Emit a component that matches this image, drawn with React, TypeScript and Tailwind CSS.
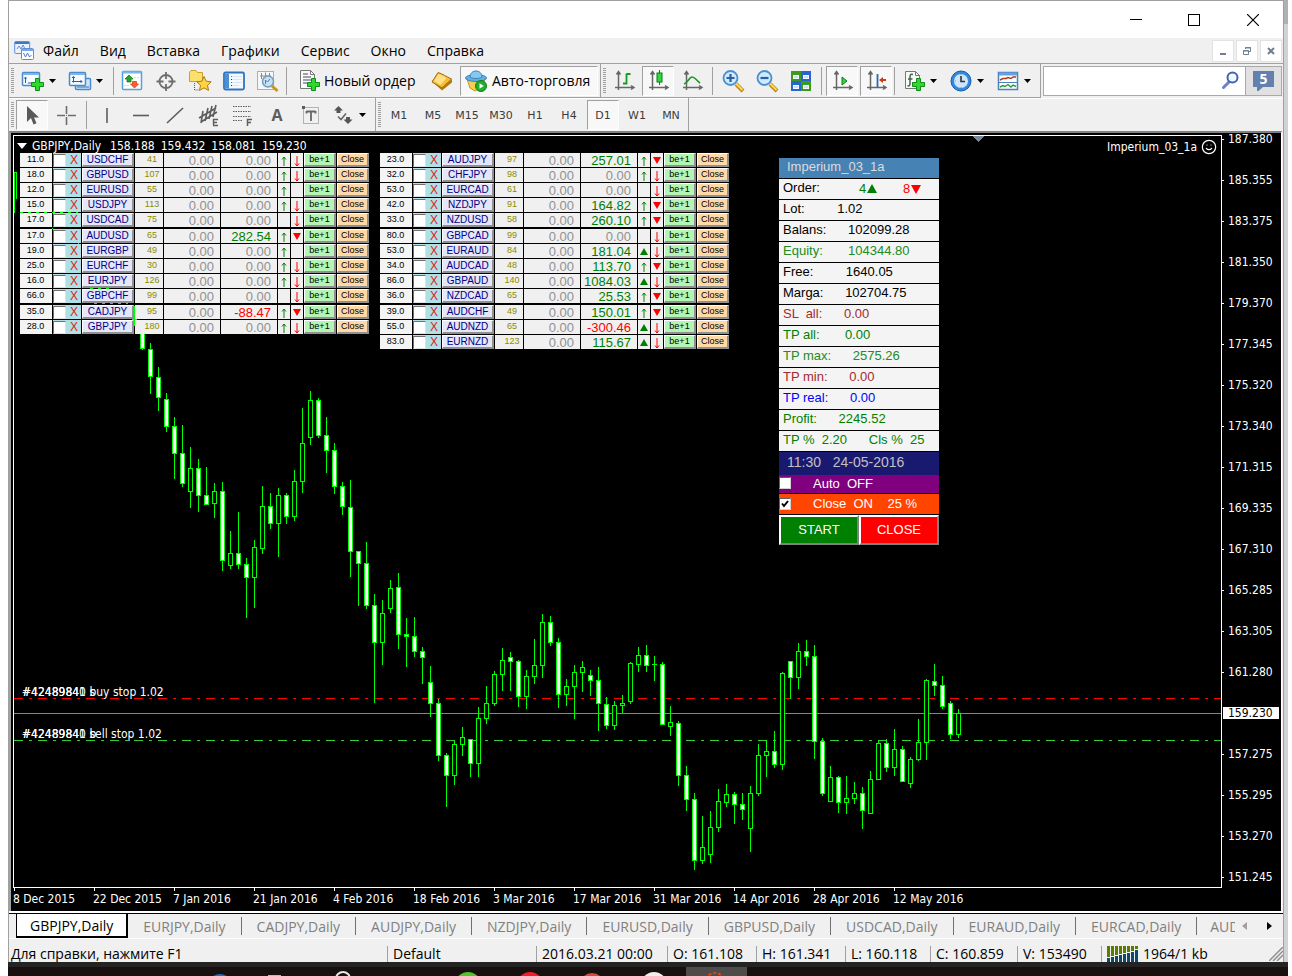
import React from "react";
import { Smile } from "lucide-react";

type Candle = [x: number, high: number, top: number, bottom: number, low: number, down: 0 | 1];

type PairRow = {
  spread: string;
  pair: string;
  points: number;
  profit: string;
  up: "" | "thin" | "full";
  down: "" | "thin" | "full";
};

const candles: Candle[] = [
  [134, 306, 319, 320, 326, 1],
  [142, 322, 330, 349, 350, 1],
  [150, 343, 349, 377, 394, 1],
  [158, 367, 377, 398, 411, 1],
  [166, 393, 399, 427, 432, 1],
  [174, 417, 426, 454, 479, 1],
  [182, 425, 453, 484, 487, 1],
  [190, 447, 468, 492, 508, 0],
  [198, 459, 468, 496, 512, 1],
  [206, 467, 495, 505, 505, 1],
  [214, 483, 491, 504, 518, 0],
  [222, 482, 491, 561, 571, 1],
  [230, 531, 553, 566, 569, 0],
  [238, 512, 553, 565, 569, 1],
  [246, 558, 564, 578, 618, 1],
  [254, 540, 547, 578, 608, 0],
  [262, 486, 506, 549, 554, 0],
  [270, 493, 506, 524, 529, 1],
  [278, 488, 495, 524, 557, 0],
  [286, 493, 495, 517, 524, 1],
  [294, 470, 481, 517, 521, 0],
  [302, 408, 443, 482, 493, 0],
  [310, 391, 400, 438, 445, 0],
  [318, 398, 400, 436, 438, 1],
  [326, 417, 435, 451, 473, 1],
  [334, 443, 450, 487, 494, 1],
  [342, 482, 486, 507, 515, 1],
  [350, 480, 507, 552, 577, 1],
  [358, 551, 551, 564, 606, 1],
  [366, 542, 563, 606, 609, 1],
  [374, 594, 605, 643, 703, 1],
  [382, 600, 613, 643, 665, 0],
  [390, 580, 588, 609, 613, 0],
  [398, 573, 587, 635, 649, 1],
  [406, 618, 634, 637, 667, 1],
  [414, 617, 636, 652, 657, 1],
  [422, 647, 651, 658, 684, 1],
  [430, 666, 682, 704, 717, 1],
  [438, 699, 703, 756, 761, 1],
  [446, 753, 755, 776, 807, 1],
  [454, 741, 744, 776, 785, 0],
  [462, 727, 737, 745, 756, 0],
  [470, 739, 739, 764, 777, 1],
  [478, 707, 718, 764, 777, 0],
  [486, 686, 703, 719, 724, 0],
  [494, 671, 674, 704, 706, 0],
  [502, 648, 660, 675, 691, 0],
  [510, 652, 657, 662, 691, 1],
  [518, 660, 661, 697, 707, 1],
  [526, 670, 676, 697, 709, 0],
  [534, 639, 665, 677, 684, 0],
  [542, 614, 622, 666, 678, 0],
  [550, 616, 622, 643, 646, 1],
  [558, 638, 642, 695, 708, 1],
  [566, 679, 686, 695, 706, 0],
  [574, 665, 672, 687, 719, 0],
  [582, 661, 667, 673, 692, 0],
  [590, 670, 675, 681, 696, 1],
  [598, 667, 680, 704, 731, 1],
  [606, 697, 704, 726, 729, 1],
  [614, 701, 705, 726, 730, 0],
  [622, 695, 703, 706, 713, 0],
  [630, 662, 663, 702, 704, 0],
  [638, 647, 655, 665, 672, 0],
  [646, 645, 655, 666, 672, 1],
  [654, 656, 664, 665, 681, 1],
  [662, 662, 664, 725, 725, 1],
  [670, 706, 722, 727, 736, 0],
  [678, 721, 723, 776, 786, 1],
  [686, 766, 775, 800, 811, 1],
  [694, 793, 799, 861, 870, 1],
  [702, 816, 847, 861, 864, 0],
  [710, 811, 827, 855, 863, 0],
  [718, 789, 801, 828, 832, 0],
  [726, 784, 794, 803, 807, 0],
  [734, 792, 794, 805, 824, 1],
  [742, 793, 804, 810, 820, 1],
  [750, 786, 793, 829, 852, 0],
  [758, 744, 755, 794, 796, 0],
  [766, 740, 751, 756, 777, 0],
  [774, 731, 751, 765, 768, 1],
  [782, 672, 673, 765, 770, 0],
  [790, 661, 661, 678, 699, 1],
  [798, 643, 651, 678, 689, 0],
  [806, 640, 651, 657, 666, 1],
  [814, 645, 656, 742, 759, 1],
  [822, 738, 741, 794, 796, 1],
  [830, 766, 777, 802, 802, 0],
  [838, 776, 777, 803, 813, 1],
  [846, 776, 798, 803, 814, 0],
  [854, 782, 793, 799, 804, 0],
  [862, 787, 793, 811, 829, 1],
  [870, 771, 779, 814, 814, 0],
  [878, 740, 743, 780, 780, 0],
  [886, 739, 743, 768, 772, 1],
  [894, 729, 749, 768, 776, 0],
  [902, 746, 749, 782, 782, 1],
  [910, 757, 759, 784, 788, 0],
  [918, 719, 742, 760, 761, 0],
  [926, 679, 680, 743, 760, 0],
  [934, 664, 681, 686, 696, 1],
  [942, 676, 685, 707, 709, 1],
  [950, 701, 703, 735, 739, 1],
  [958, 709, 713, 735, 738, 0],
];

const row = (
  spread: string,
  pair: string,
  points: number,
  profit: string,
  up: PairRow["up"],
  down: PairRow["down"]
): PairRow => ({ spread, pair, points, profit, up, down });

const leftPairs: PairRow[] = [
  row("11.0", "USDCHF", 41, "0.00", "thin", "thin"),
  row("18.0", "GBPUSD", 107, "0.00", "thin", "thin"),
  row("12.0", "EURUSD", 55, "0.00", "thin", ""),
  row("15.0", "USDJPY", 113, "0.00", "thin", "thin"),
  row("17.0", "USDCAD", 75, "0.00", "", "thin"),
  row("17.0", "AUDUSD", 65, "282.54", "thin", "full"),
  row("19.0", "EURGBP", 49, "0.00", "thin", ""),
  row("25.0", "EURCHF", 30, "0.00", "thin", "thin"),
  row("16.0", "EURJPY", 126, "0.00", "thin", "thin"),
  row("66.0", "GBPCHF", 99, "0.00", "", "thin"),
  row("35.0", "CADJPY", 95, "-88.47", "thin", "full"),
  row("28.0", "GBPJPY", 180, "0.00", "thin", "thin"),
];

const rightPairs: PairRow[] = [
  row("23.0", "AUDJPY", 97, "257.01", "thin", "full"),
  row("32.0", "CHFJPY", 98, "0.00", "thin", "thin"),
  row("53.0", "EURCAD", 61, "0.00", "", "thin"),
  row("42.0", "NZDJPY", 91, "164.82", "thin", "full"),
  row("33.0", "NZDUSD", 58, "260.10", "thin", "full"),
  row("80.0", "GBPCAD", 99, "0.00", "", "thin"),
  row("53.0", "EURAUD", 84, "181.04", "full", "thin"),
  row("34.0", "AUDCAD", 48, "113.70", "thin", "full"),
  row("86.0", "GBPAUD", 140, "1084.03", "full", "thin"),
  row("36.0", "NZDCAD", 65, "25.53", "thin", "full"),
  row("39.0", "AUDCHF", 49, "150.01", "thin", "full"),
  row("55.0", "AUDNZD", 65, "-300.46", "full", "thin"),
  row("83.0", "EURNZD", 123, "115.67", "full", "thin"),
];

const prices = [
  "187.380", "185.355", "183.375", "181.350", "179.370", "177.345", "175.320",
  "173.340", "171.315", "169.335", "167.310", "165.285", "163.305", "161.280",
  "159.230", "157.275", "155.295", "153.270", "151.245",
];

const dates = [
  "8 Dec 2015", "22 Dec 2015", "7 Jan 2016", "21 Jan 2016", "4 Feb 2016", "18 Feb 2016",
  "3 Mar 2016", "17 Mar 2016", "31 Mar 2016", "14 Apr 2016", "28 Apr 2016", "12 May 2016",
];

const accountRows = [
  { text: "Lot:         1.02", color: "text-black" },
  { text: "Balans:      102099.28", color: "text-black" },
  { text: "Equity:       104344.80", color: "text-[#228b22]" },
  { text: "Free:         1640.05", color: "text-black" },
  { text: "Marga:      102704.75", color: "text-black" },
  { text: "SL  all:      0.00", color: "text-[#a52a2a]" },
  { text: "TP all:       0.00", color: "text-[#008000]" },
  { text: "TP max:      2575.26", color: "text-[#228b22]" },
  { text: "TP min:      0.00", color: "text-[#a52a2a]" },
  { text: "TP real:      0.00", color: "text-[#0000ff]" },
  { text: "Profit:      2245.52", color: "text-[#008000]" },
  { text: "TP %  2.20      Cls %  25", color: "text-[#008000]" },
];

const menuItems = ["Файл", "Вид", "Вставка", "Графики", "Сервис", "Окно", "Справка"];
const quotes = ["158.188", "159.432", "158.081", "159.230"];
const periods = ["M1", "M5", "M15", "M30", "H1", "H4", "D1", "W1", "MN"];
const chartTabs = ["EURJPY", "CADJPY", "AUDJPY", "NZDJPY", "EURUSD", "GBPUSD", "USDCAD", "EURAUD", "EURCAD"];

const Icon: React.FC<{ children: React.ReactNode }> = ({ children }) => (
  <svg width="24" height="24" viewBox="0 0 24 24" fill="none" className="shrink-0" aria-hidden="true">
    {children}
  </svg>
);

const Plus = () => (
  <path d="M14.5 9.5h4v4h4v4h-4v4h-4v-4h-4v-4h4z" fill="#2fd82f" stroke="#0c8f14" />
);

const Axes = () => (
  <path d="M6.5 3v18M3 18.5h18M4.5 5.5l2-3 2 3M19 16.500l3 2-3 2" stroke="#666" strokeWidth="1.500" />
);

const NewChartIcon = () => (
  <Icon>
    <rect x="1.500" y="3.500" width="17" height="13" rx="1" fill="#f4faff" stroke="#4a8ccb" strokeWidth="1.500" />
    <path d="M2 5h16" stroke="#7fb4e6" strokeWidth="2" />
    <path d="M4.500 8v6M3.500 9.500l1-1.500 1 1.500M7 14h4" stroke="#335f9c" />
    <Plus />
  </Icon>
);

const ProfilesIcon = () => (
  <Icon>
    <rect x="7.500" y="9.500" width="15" height="11" rx="1" fill="#cfe4f8" stroke="#4a8ccb" strokeWidth="1.500" />
    <path d="M9 18h12" stroke="#2f6db5" />
    <rect x="1.500" y="3.500" width="16" height="13" rx="1" fill="#f4faff" stroke="#4a8ccb" strokeWidth="1.500" />
    <path d="M2 5h15" stroke="#7fb4e6" strokeWidth="2" />
    <path d="M5.500 7.500v6M4 9l1.500-1.500L7 9M4 12.500h10M12.500 11l1.500 1.500-1.500 1.500" stroke="#335f9c" />
  </Icon>
);

const MarketWatchIcon = () => (
  <Icon>
    <rect x="2.500" y="2.500" width="19" height="18" rx="1" fill="#fff" stroke="#57a0dc" strokeWidth="1.500" />
    <path d="M3 3.500h18" stroke="#79b8ea" strokeWidth="2" />
    <path d="M14 8.500h6M4 16.500h5" stroke="#c3dff5" strokeDasharray="2 1" />
    <path d="M9 6l4 4h-2v3H7v-3H5z" fill="#21a52b" stroke="#0d7216" strokeWidth=".7" />
    <path d="M14.500 19l-4-4h2v-2.500h4V15h2z" fill="#ff5f2e" stroke="#c9340b" strokeWidth=".7" />
  </Icon>
);

const CrosshairIcon = () => (
  <Icon>
    <circle cx="12" cy="12.500" r="6.500" stroke="#6d6d6d" strokeWidth="1.800" />
    <path d="M12 3v7M12 15v7M2.500 12.500h7M14.500 12.500h7" stroke="#6d6d6d" strokeWidth="1.800" />
  </Icon>
);

const NavigatorIcon = () => (
  <Icon>
    <path d="M1.500 3.500l1.500-2h5l1.500 2h5v9h-13z" fill="#fbe06e" stroke="#c9a227" />
    <path d="M6.500 14v7h5" stroke="#555" strokeDasharray="1 1" />
    <path d="M16 7.500l2.200 4.700 5 .6-3.700 3.500 1 5.100-4.500-2.500-4.500 2.500 1-5.100-3.700-3.500 5-.6z" fill="#ffd440" stroke="#a8781b" />
  </Icon>
);

const TerminalIcon = () => (
  <Icon>
    <rect x="2" y="3.500" width="20" height="17" rx="1.500" fill="#f3f9ff" stroke="#2f74bd" strokeWidth="1.800" />
    <rect x="3" y="4.500" width="4" height="15" fill="#4a90d9" />
    <path d="M9 7.500h11M9 10.500h11M9 13.500h11M9 16.500h8" stroke="#d8e5f5" />
    <path d="M9 7.500h1M9 13.500h1" stroke="#e05030" />
    <path d="M9 10.500h1M9 16.500h1" stroke="#333" />
  </Icon>
);

const TesterIcon = () => (
  <Icon>
    <rect x="1.500" y="2.500" width="16" height="18" fill="#f7f7f7" stroke="#b5ae9c" />
    <path d="M4 7h11M5.500 4v6M9.500 3.500V10M13.500 4v5" stroke="#8a8a8a" />
    <circle cx="12" cy="12.500" r="5.500" fill="#bfe0f7" fillOpacity=".9" stroke="#7a9dbb" strokeWidth="1.500" />
    <path d="M9.500 15v-4l2 2 2.500-3" stroke="#5a7fa5" />
    <path d="M16 17l5.500 5" stroke="#c9961a" strokeWidth="3" />
  </Icon>
);

const OrderIcon = () => (
  <Icon>
    <path d="M3.500 1.500h10l4 4v14h-14z" fill="#fafafa" stroke="#777" />
    <path d="M13.500 1.500v4h4" stroke="#777" />
    <path d="M6 5h5M6 8h8M6 11h8M6 14h4" stroke="#7d8790" strokeWidth="1.500" />
    <Plus />
  </Icon>
);

const BookIcon = () => (
  <Icon>
    <path d="M2 12.500l10 9 10-8v-3.500l-10 8-9-7z" fill="#b5790e" />
    <path d="M2 13L8 3.500c5 1.500 8 4 13.500 6.500L12 19z" fill="#f3bd35" stroke="#a26c0c" />
    <path d="M4 12L8.500 5c3 1 5 2 8 4l-6 7z" fill="#ffe08a" />
  </Icon>
);

const AutoIcon = () => (
  <Icon>
    <path d="M3 10h18l-4 9-6 3-5-3z" fill="#f5cf4d" stroke="#c2951b" />
    <ellipse cx="12" cy="9" rx="10.500" ry="3.500" fill="#62aee2" stroke="#3a83bb" />
    <path d="M6 8c0-8 12-8 12 0-3 2-9 2-12 0z" fill="#85c8f0" stroke="#3a83bb" />
    <circle cx="17" cy="17" r="5.500" fill="#1faf2c" stroke="#0c8217" />
    <path d="M15.500 14.300v5.400l4.300-2.700z" fill="#fff" />
  </Icon>
);

const BarsIcon = () => (
  <Icon>
    <Axes />
    <path d="M14.500 4.500v11M14.500 5h4M11 14.500h3.500" stroke="#159a25" strokeWidth="1.800" />
  </Icon>
);

const CandlesIcon = () => (
  <Icon>
    <Axes />
    <path d="M13.500 1v15" stroke="#0b7c17" />
    <rect x="11" y="4" width="5" height="9" fill="#2fd83f" stroke="#0b7c17" />
  </Icon>
);

const LineIcon = () => (
  <Icon>
    <Axes />
    <path d="M4 15c4-1 5-7 8-7s4 3 8 6" stroke="#159a25" strokeWidth="1.600" />
  </Icon>
);

const MagnifierIcon: React.FC<{ plus?: boolean }> = ({ plus }) => (
  <Icon>
    <path d="M15 15l7 7" stroke="#b98613" strokeWidth="4" />
    <path d="M15 14.500l6.500 6.500" stroke="#ffd95c" strokeWidth="2" />
    <circle cx="9.500" cy="9" r="7" fill="#cdeaff" stroke="#4a90cc" strokeWidth="1.800" />
    <path d={plus ? "M5.500 9h8M9.500 5v8" : "M5.500 9h8"} stroke="#2b5f9e" strokeWidth="2.200" />
  </Icon>
);

const TilesIcon = () => (
  <Icon>
    <path d="M2 2h10v10H2zM12 12h10v10H12z" fill="#3d9a1c" />
    <path d="M12 2h10v10H12zM2 12h10v10H2z" fill="#2765d0" />
    <path d="M4 6h6v4H4zM14 6h6v4h-6zM4 16h6v4H4zM14 16h6v4h-6z" fill="#f4f8ff" />
    <path d="M5 8h4M15 8h4M5 18h4M15 18h4" stroke="#a9c6ee" />
  </Icon>
);

const ScrollIcon = () => (
  <Icon>
    <Axes />
    <path d="M12 8v8l5-4z" fill="#34d643" stroke="#0b7c17" />
  </Icon>
);

const ShiftIcon = () => (
  <Icon>
    <Axes />
    <path d="M13.500 5v13" stroke="#2f68ad" strokeWidth="1.800" />
    <path d="M15 11l4-3v2h3v2h-3v2z" fill="#c73d10" />
  </Icon>
);

const IndicatorsIcon = () => (
  <Icon>
    <path d="M3.500 2.500h10l4 4v13h-14z" fill="#fafafa" stroke="#777" />
    <path d="M13.500 2.500v4h4" stroke="#777" />
    <path d="M11 5.500c-3-1-3 1-3 3v6c0 2-1 3-2.500 2M6 10h4.500" stroke="#48634b" strokeWidth="1.500" />
    <Plus />
  </Icon>
);

const ClockIcon = () => (
  <Icon>
    <circle cx="12" cy="12" r="8.500" fill="#cfe6fa" stroke="#2f8be0" strokeWidth="3" />
    <circle cx="12" cy="12" r="10" stroke="#1a5ba5" />
    <path d="M12 7v5.500h4" stroke="#333" strokeWidth="1.600" />
    <path d="M12 5v1M12 18v1M6 12h1" stroke="#79a5cf" />
  </Icon>
);

const TemplateIcon = () => (
  <Icon>
    <rect x="2.500" y="3.500" width="19" height="17" fill="#fff" stroke="#4a84bf" strokeWidth="1.500" />
    <path d="M3 5h18" stroke="#64a2e0" strokeWidth="3" />
    <path d="M3 13.500h18" stroke="#4a84bf" />
    <path d="M4 11l3-1.500h3l2-1 3 1 2-1.500h3" stroke="#b03a1c" strokeWidth="1.400" />
    <path d="M4 18l3-1.500 2 1 3-2 3 2.500 2-2 3 1.500" stroke="#2a9b3a" strokeWidth="1.400" />
  </Icon>
);

const CursorIcon = () => (
  <Icon>
    <path d="M7 3v16l4-4 2.500 6.500 3-1.200L14 14.500h5z" fill="#5a5a5a" />
  </Icon>
);

const CrossIcon = () => (
  <Icon>
    <path d="M12.500 3v8M12.500 14v8M3 12.500h8M14 12.500h8" stroke="#6d6d6d" strokeWidth="1.600" />
    <path d="M12 12.500h1" stroke="#6d6d6d" />
  </Icon>
);

const strokeIcon = (d: string) => (
  <Icon>
    <path d={d} stroke="#5d5d5d" strokeWidth="1.600" />
  </Icon>
);

const ChannelIcon = () => (
  <Icon>
    <path d="M2 15l17-10M4 19L20 9M6 8l-2 12M11 5L8 18M15 3l-3 13M19 2l-3 12" stroke="#5d5d5d" strokeWidth="1.600" />
    <path d="M16.500 16v6M16 16.500h5M16 19.500h4M16 22.500h5" stroke="#5d5d5d" strokeWidth="1.400" />
  </Icon>
);

const FiboIcon = () => (
  <Icon>
    <path d="M2 3.500h18M2 8.500h18M2 13.500h18M2 17.500h10" stroke="#5d5d5d" strokeDasharray="1.500 1" />
    <path d="M16.500 16v7M16 16.500h5M16 19.500h4" stroke="#5d5d5d" strokeWidth="1.500" />
  </Icon>
);

const TextLabelIcon = () => (
  <Icon>
    <rect x="4.500" y="4.500" width="15" height="16" stroke="#777" strokeDasharray="1 1" />
    <path d="M3 3h3v3H3z" fill="#5d5d5d" />
    <path d="M7.500 8.500h9M12 9v9M7.500 8v2.500M16.500 8v2.500" stroke="#666" strokeWidth="1.800" />
  </Icon>
);

const ShapesIcon = () => (
  <Icon>
    <path d="M7.500 3l4.500 4.500H9.500V10h-4V7.500H3zM17 21l-4.500-4.500H15V14h4v2.500h2.500z" fill="#555" />
    <path d="M7 13.500l3 3 5-6" stroke="#666" strokeWidth="1.600" />
  </Icon>
);

const Grip = () => (
  <span className="ml-[2px] mr-px h-[26px] w-[3px] shrink-0 bg-[repeating-linear-gradient(to_bottom,#a0a0a0_0_1px,#f0f0f0_1px_2px)]" />
);

const Separator: React.FC<{ tight?: boolean }> = ({ tight }) => (
  <span className={`${tight ? "mx-px" : "mx-[3px]"} h-7 w-px shrink-0 bg-[#a0a0a0]`} />
);

const Tool: React.FC<{ label: string; pressed?: boolean; children: React.ReactNode }> = ({
  label,
  pressed,
  children,
}) => (
  <button
    type="button"
    aria-label={label}
    className={
      pressed
        ? "mx-px flex h-[30px] w-8 shrink-0 items-center justify-center border border-b-white border-r-white border-l-[#a0a0a0] border-t-[#a0a0a0] bg-[#f8f8f8]"
        : "flex h-[30px] w-[34px] shrink-0 items-center justify-center"
    }
  >
    {children}
  </button>
);

const DropTool: React.FC<{ label: string; children: React.ReactNode }> = ({ label, children }) => (
  <button type="button" aria-label={label} className="flex h-[30px] w-[47px] shrink-0 items-center pl-[3px]">
    {children}
    <svg width="8" height="4" className="ml-1 shrink-0" aria-hidden="true">
      <path d="M0 0h7L3.500 4z" fill="#000" />
    </svg>
  </button>
);

const MainToolbar = () => (
  <div className="flex items-center border-t border-[#a0a0a0]">
    <div className="flex h-[34px] shrink-0 items-center border-b border-r border-[#a0a0a0] pr-px">
      <Grip />
      <span className="flex pl-[3px]">
        <DropTool label="Новый график"><NewChartIcon /></DropTool>
        <DropTool label="Профили"><ProfilesIcon /></DropTool>
      </span>
      <Separator tight />
      <Tool label="Обзор рынка"><MarketWatchIcon /></Tool>
      <Tool label="Окно данных"><CrosshairIcon /></Tool>
      <Tool label="Навигатор"><NavigatorIcon /></Tool>
      <Tool label="Терминал"><TerminalIcon /></Tool>
      <Tool label="Тестер стратегий"><TesterIcon /></Tool>
      <Separator tight />
      <button type="button" className="flex h-[30px] w-[137px] shrink-0 items-center gap-[3px] whitespace-nowrap pl-[9px]">
        <OrderIcon />
        Новый ордер
      </button>
      <Tool label="MetaEditor"><BookIcon /></Tool>
      <button
        type="button"
        className="mx-px flex h-[30px] w-[138px] shrink-0 items-center gap-1 whitespace-nowrap border border-b-white border-r-white border-l-[#a0a0a0] border-t-[#a0a0a0] bg-[#f8f8f8] pl-[3px]"
      >
        <AutoIcon />
        Авто-торговля
      </button>
    </div>
    <div className="flex h-[34px] shrink-0 items-center border-b border-r border-[#a0a0a0]">
      <Grip />
      <Tool label="Бары"><BarsIcon /></Tool>
      <Tool label="Японские свечи" pressed><CandlesIcon /></Tool>
      <Tool label="Линия"><LineIcon /></Tool>
      <Separator />
      <Tool label="Увеличить"><MagnifierIcon plus /></Tool>
      <Tool label="Уменьшить"><MagnifierIcon /></Tool>
      <Tool label="Расположить окна"><TilesIcon /></Tool>
      <Separator />
      <Tool label="Автопрокрутка" pressed><ScrollIcon /></Tool>
      <Tool label="Сдвиг графика" pressed><ShiftIcon /></Tool>
      <Separator tight />
      <span className="flex pl-[3px]">
        <DropTool label="Индикаторы"><IndicatorsIcon /></DropTool>
        <DropTool label="Периоды"><ClockIcon /></DropTool>
        <DropTool label="Шаблоны"><TemplateIcon /></DropTool>
      </span>
    </div>
    <div className="ml-[2px] mr-px flex h-[30px] min-w-0 flex-1 border border-[#a9a9a9] bg-white">
      <input type="search" aria-label="Поиск" className="min-w-0 flex-1 px-2 outline-none" />
      <svg width="20" height="20" viewBox="0 0 20 20" fill="none" className="mr-1 mt-1 shrink-0" aria-hidden="true">
        <path d="M2.500 16.500l6-6" stroke="#6a83c4" strokeWidth="3" strokeLinecap="round" />
        <circle cx="11.500" cy="6.500" r="5" fill="#f4f8ff" stroke="#3f62b5" strokeWidth="2" />
      </svg>
      <button type="button" aria-label="Сообщения" className="flex w-9 shrink-0 flex-col items-center justify-center border-l border-[#a9a9a9] bg-[#e1e1e1]">
        <span className="flex h-4 w-[21px] items-center justify-center bg-[#6480ae] text-sm font-bold text-white">
          5
        </span>
        <svg width="21" height="4" className="block" aria-hidden="true">
          <path d="M4 0h6L5.500 4H4z" fill="#6480ae" />
        </svg>
      </button>
    </div>
  </div>
);

const DrawToolbar = () => (
  <div className="flex h-[33px] items-center border-t border-white pb-px">
    <div className="flex h-[33px] shrink-0 items-center border-r border-[#a0a0a0]">
      <Grip />
      <Tool label="Курсор" pressed><CursorIcon /></Tool>
      <Tool label="Перекрестие"><CrossIcon /></Tool>
      <Separator />
      <Tool label="Вертикальная линия">{strokeIcon("M12 5v15")}</Tool>
      <Tool label="Горизонтальная линия">{strokeIcon("M4 12.500h16")}</Tool>
      <Tool label="Трендовая линия">{strokeIcon("M4 20L20 5")}</Tool>
      <Tool label="Канал"><ChannelIcon /></Tool>
      <Tool label="Фибоначчи"><FiboIcon /></Tool>
      <Tool label="Текст">
        <span className="text-base font-bold leading-6 text-[#5d5d5d]">A</span>
      </Tool>
      <Tool label="Метка"><TextLabelIcon /></Tool>
      <DropTool label="Стрелки"><ShapesIcon /></DropTool>
    </div>
    <div className="flex h-[33px] shrink-0 items-center border-r border-[#a0a0a0]">
      <Grip />
      {periods.map((p) => (
        <Tool key={p} label={p} pressed={p === "D1"}>
          <span className="pt-1 font-['DejaVu_Sans',sans-serif] text-[11px] text-[#3c3c3c]">{p}</span>
        </Tool>
      ))}
    </div>
  </div>
);

const Arrow: React.FC<{ kind: "" | "thin" | "full"; up?: boolean }> = ({ kind, up }) => {
  if (!kind) return null;
  const color = up ? "#008000" : "#ff0000";
  return (
    <svg width="10" height="12" viewBox="0 0 10 12" fill="none" className="mx-auto block" aria-hidden="true">
      {kind === "thin" && <path d={up ? "M5 2v9M3 4.500L5 2l2 2.500" : "M5 1v10M3 8.500L5 11l2-2.500"} stroke={color} />}
      {kind === "full" && <path d={up ? "M1 9h8L5 2z" : "M1 2h8L5 9z"} fill={color} />}
    </svg>
  );
};

const bevel =
  "block h-[14px] w-full border-b-2 border-l border-r-2 border-t border-b-[#909090] border-l-white border-r-[#909090] border-t-white text-center leading-[11px]";

const profitColor = (value: string) => {
  if (value === "0.00") return "text-[#909090]";
  return value.startsWith("-") ? "text-[#ff0000]" : "text-[#008000]";
};

const PairTable: React.FC<{ rows: PairRow[] }> = ({ rows }) => (
  <table className="w-[351px] shrink-0 table-fixed border-separate border-spacing-px font-['Liberation_Sans',sans-serif] text-[9px]">
    <colgroup>
      <col className="w-[32px]" />
      <col className="w-[28px]" />
      <col className="w-[52px]" />
      <col className="w-[28px]" />
      <col className="w-[56px]" />
      <col className="w-[56px]" />
      <col className="w-[12px]" />
      <col className="w-[12px]" />
      <col className="w-[32px]" />
      <col className="w-[32px]" />
    </colgroup>
    <tbody>
      {rows.map((r, i) => {
        const gap = i === 5 || i === 10 ? "border-t border-black p-0" : "p-0";
        return (
          <tr key={r.pair} className="text-black">
            <td className={gap}>
              <div className="h-[14px] bg-[#f4f4f4] pr-px text-center leading-[13px]">{r.spread}</div>
            </td>
            <td className={gap}>
              <div className="flex h-[14px] items-center bg-[#b0e0e6]">
                <input
                  type="checkbox"
                  aria-label={`${r.pair} on`}
                  className="h-[13px] w-[13px] shrink-0 appearance-none border border-b-[#e0e0e0] border-l-[#707070] border-r-[#e0e0e0] border-t-[#707070] bg-white"
                />
                <span className="flex-1 pl-px text-center text-[12px] leading-[14px] text-[#e02020]">X</span>
              </div>
            </td>
            <td className={gap}>
              <button type="button" className={`${bevel} bg-[#e6e6fa] text-[10px] text-[#000080]`}>
                {r.pair}
              </button>
            </td>
            <td className={gap}>
              <div className="h-[14px] bg-[#f0f0f0] pl-[6px] text-center leading-[12px] text-[#8b8b00]">{r.points}</div>
            </td>
            <td className={gap}>
              <div className="h-[14px] bg-[#f0f0f0] pr-[6px] text-right text-[13px] leading-4 text-[#909090]">0.00</div>
            </td>
            <td className={gap}>
              <div className={`h-[14px] bg-[#f0f0f0] pr-[6px] text-right text-[13px] leading-4 ${profitColor(r.profit)}`}>
                {r.profit}
              </div>
            </td>
            <td className={gap}>
              <div className="h-[14px] bg-[#f0f0f0] pt-[2px]"><Arrow kind={r.up} up /></div>
            </td>
            <td className={gap}>
              <div className="h-[14px] bg-[#f0f0f0] pt-[2px]"><Arrow kind={r.down} /></div>
            </td>
            <td className={gap}>
              <button type="button" className={`${bevel} bg-[#b4f5b4]`}>be+1</button>
            </td>
            <td className={gap}>
              <button type="button" className={`${bevel} bg-[#ffd9a8]`}>Close</button>
            </td>
          </tr>
        );
      })}
    </tbody>
  </table>
);

const box = "relative block h-3 w-3 shrink-0 appearance-none border border-b-[#d0d0d0] border-l-[#606060] border-r-[#d0d0d0] border-t-[#606060] bg-white";

const AccountPanel = () => (
  <div className="mt-[6px] flex w-40 shrink-0 flex-col gap-px self-start font-['Liberation_Sans',sans-serif] text-[13px] leading-[18px]">
    <div className="h-5 bg-[#4682b4] pl-2 text-[#dcdcdc]">Imperium_03_1a</div>
    <div className="flex h-5 bg-[#f4f4f4] pl-1">
      <span className="w-[76px] text-black">Order:</span>
      <span className="flex w-11 items-center text-[#008000]">
        4
        <svg width="10" height="10" className="ml-px" aria-hidden="true"><path d="M0 9h10L5 0z" fill="#008000" /></svg>
      </span>
      <span className="flex items-center text-[#ff0000]">
        8
        <svg width="10" height="10" className="ml-px" aria-hidden="true"><path d="M0 1h10L5 10z" fill="#ff0000" /></svg>
      </span>
    </div>
    {accountRows.map((r) => (
      <div key={r.text} className={`h-5 whitespace-pre bg-[#f4f4f4] pl-1 ${r.color}`}>
        {r.text}
      </div>
    ))}
    <div>
      <div className="h-[23px] whitespace-pre bg-[#191970] pl-2 text-[14px] leading-5 text-[#c0c0c0]">11:30   24-05-2016</div>
      <label className="flex h-[18px] whitespace-pre bg-[#800080] text-white">
        <input type="checkbox" className={`${box} mt-[2px]`} />
        <span className="pl-[22px]">Auto  OFF</span>
      </label>
    </div>
    <label className="flex h-5 items-center whitespace-pre bg-[#ff4500] text-white">
      <span className="relative">
        <input type="checkbox" defaultChecked className={box} />
        <svg width="12" height="12" viewBox="0 0 12 12" fill="none" className="pointer-events-none absolute inset-0" aria-hidden="true">
          <path d="M3 5.500l2 2.500 4-5" stroke="#000" strokeWidth="2" />
        </svg>
      </span>
      <span className="pl-[22px]">Close  ON    25 %</span>
    </label>
    <div className="flex h-[30px] text-white">
      <button type="button" className="flex-1 border-2 border-b-[#808080] border-l-white border-r-[#808080] border-t-white bg-[#008000]">START</button>
      <button type="button" className="flex-1 border-2 border-b-[#808080] border-l-white border-r-[#808080] border-t-white bg-[#ff0000]">CLOSE</button>
    </div>
  </div>
);

const ChartDrawing = () => (
  <svg className="absolute inset-0 h-full w-full" shapeRendering="crispEdges" aria-hidden="true">
    <g transform="translate(-14 -136)">
      <path d="M14 698.500H4000" stroke="#ff0000" strokeDasharray="9 6 3 6" />
      <path d="M14 713.500H4000" stroke="#778899" />
      <path d="M14 740.500H4000" stroke="#32cd32" strokeDasharray="9 6 3 6" />
      <path d="M14.500 172v41M14 172.500h3M16.500 172v27" stroke="#00ff00" />
      <path d="M20 212.500h20M44 212.500h34M50 228.500h30M78 243v32M90 288.500h24M94 303.500h34" stroke="#00ff00" strokeDasharray="3 5" />
      {candles.map(([x, high, top, bottom, low, down]) => (
        <g key={x}>
          <rect x={x} y={high} width="1" height={low - high} fill="#00ff00" />
          {bottom - top < 2 ? (
            <rect x={x - 2} y={top} width="5" height="1" fill="#00ff00" />
          ) : (
            <rect
              x={x - 1.5}
              y={top + 0.5}
              width="4"
              height={bottom - top - 1}
              fill={down ? "#fff" : "#000"}
              stroke="#00ff00"
            />
          )}
        </g>
      ))}
      <path d="M972 136h13l-6.500 6z" fill="#778899" />
      <g fill="#fff" className="font-['DejaVu_Sans_Condensed','DejaVu_Sans',sans-serif] text-[12px]">
        <text x="22" y="696">#42489840 s</text>
        <text x="22" y="696">#42489841 buy stop 1.02</text>
        <text x="22" y="738">#42489840 b</text>
        <text x="22" y="738">#42489841 sell stop 1.02</text>
      </g>
    </g>
  </svg>
);

const Chart = () => (
  <main className="mr-px flex flex-1 border-l-2 border-r border-t-2 border-l-[#a0a0a0] border-r-white border-t-[#808080] bg-black pl-[2px] font-['DejaVu_Sans_Condensed','DejaVu_Sans',sans-serif] text-[12px] text-white">
    <div className="flex min-w-0 flex-1 flex-col pt-[2px]">
      <div className="relative flex-1 border border-white">
        <ChartDrawing />
        <div className="relative flex h-4 items-center pl-[3px] pr-1 pt-1">
          <svg width="10" height="6" aria-hidden="true"><path d="M0 0h10L5 6z" fill="#fff" /></svg>
          <span className="pl-[5px]">GBPJPY,Daily</span>
          <span className="flex gap-[6px] pl-[9px]">
            {quotes.map((q) => (
              <span key={q}>{q}</span>
            ))}
          </span>
          <span className="ml-auto flex items-center gap-1 pt-px">
            Imperium_03_1a
            <Smile size={16} strokeWidth={1.8} />
          </span>
        </div>
        <div className="relative flex items-start pl-[5px]">
          <PairTable rows={leftPairs} />
          <div className="pl-[9px]">
            <PairTable rows={rightPairs} />
          </div>
          <div className="pl-[49px]">
            <AccountPanel />
          </div>
        </div>
      </div>
      <ol className="flex h-[23px] overflow-hidden">
        {dates.map((d) => (
          <li key={d} className="w-20 shrink-0 whitespace-nowrap leading-4">
            <span className="ml-px block h-[3px] w-px bg-white" />
            {d}
          </li>
        ))}
      </ol>
    </div>
    <ol className="flex w-[59px] shrink-0 flex-col gap-[29px]">
      {prices.map((p) =>
        p === "159.230" ? (
          <li key={p} className="ml-px mr-[2px] h-3 bg-white pl-[5px] leading-3 text-black">{p}</li>
        ) : (
          <li key={p} className="flex h-3 items-center gap-1 leading-3">
            <span className="h-px w-[2px] bg-white" />
            {p}
          </li>
        )
      )}
    </ol>
  </main>
);

const ChartTabs = () => (
  <nav className="flex h-7 border-b border-t-2 border-white bg-[#f0f0f0]">
    <div className="flex min-w-0 flex-1 overflow-hidden border-t border-black pl-[7px]">
      <a href="#gbpjpy" className="flex h-6 shrink-0 items-center border-b-2 border-l border-r-2 border-black bg-white px-[13px] text-black">
        GBPJPY,Daily
      </a>
      {chartTabs.map((t) => (
        <a
          key={t}
          href={`#${t.toLowerCase()}`}
          className="mt-[3px] flex h-[18px] shrink-0 items-center border-r border-[#707070] px-[15px] text-[#808080]"
        >
          {t},Daily
        </a>
      ))}
      <a href="#audcad" className="mt-[3px] flex h-[18px] items-center pl-[13px] text-[#808080]">AUD</a>
    </div>
    <div className="flex w-[48px] shrink-0 items-center justify-between border-t border-black pl-[7px] pr-[11px]">
      <button type="button" aria-label="Влево">
        <svg width="5" height="8" aria-hidden="true"><path d="M5 0v8L0 4z" fill="#a0a0a0" /></svg>
      </button>
      <button type="button" aria-label="Вправо">
        <svg width="5" height="8" aria-hidden="true"><path d="M0 0v8l5-4z" fill="#000" /></svg>
      </button>
    </div>
  </nav>
);

const StatusBar = () => (
  <footer className="flex h-[23px] items-end overflow-hidden whitespace-nowrap bg-[#f0f0f0] leading-4">
    <span className="min-w-0 flex-1 pl-[2px]">Для справки, нажмите F1</span>
    <span className="w-[149px] shrink-0 border-l border-[#a0a0a0] pl-[5px]">Default</span>
    <span className="w-[131px] shrink-0 border-l border-[#a0a0a0] pl-[5px]">2016.03.21 00:00</span>
    <span className="w-[89px] shrink-0 border-l border-[#a0a0a0] pl-[5px]">O: 161.108</span>
    <span className="w-[89px] shrink-0 border-l border-[#a0a0a0] pl-[5px]">H: 161.341</span>
    <span className="w-[85px] shrink-0 border-l border-[#a0a0a0] pl-[5px]">L: 160.118</span>
    <span className="w-[87px] shrink-0 border-l border-[#a0a0a0] pl-[5px]">C: 160.859</span>
    <span className="w-[84px] shrink-0 border-l border-[#a0a0a0] pl-[5px]">V: 153490</span>
    <span className="flex w-[182px] shrink-0 items-center gap-[5px] border-l border-[#a0a0a0] pl-[5px]">
      <svg width="31" height="16" shapeRendering="crispEdges" aria-hidden="true">
        {[11, 10, 9, 8, 7, 6, 5, 3].map((h, i) => (
          <g key={h}>
            <rect x={i * 4} y="0" width="3" height={h} fill="#5c7a00" />
            <rect x={i * 4} y={h + 1} width="3" height={15 - h} fill="#0b4a6a" />
          </g>
        ))}
      </svg>
      1964/1 kb
      <svg width="14" height="14" className="ml-auto" aria-hidden="true">
        <path d="M0 14L14 0M4 14L14 4M8 14l6-6" stroke="#909090" strokeWidth="1.500" />
      </svg>
    </span>
  </footer>
);

const TaskBar = () => (
  <div className="h-[14px] overflow-hidden border-t-[5px] border-[#242424] bg-[#17100e]">
    <svg width="100%" height="9" className="block" aria-hidden="true">
      <rect x="678" y="0" width="61" height="9" fill="#4e4b4b" />
      <circle cx="212" cy="19" r="12" fill="#1a6fc4" />
      <rect x="260" y="8" width="13" height="1" fill="#e8bf3c" />
      <circle cx="335" cy="12" r="7" fill="#17100e" stroke="#e8e8e8" strokeWidth="2" />
      <circle cx="460" cy="18" r="13" fill="#4fc62a" />
      <circle cx="522" cy="18" r="13" fill="#f01d2c" />
      <circle cx="584" cy="18" r="12" fill="#d8483c" />
      <circle cx="646" cy="18" r="13" fill="#efefef" />
      <circle cx="707" cy="16" r="10" fill="none" stroke="#d84a14" strokeWidth="2" strokeDasharray="3 2" />
    </svg>
  </div>
);

const App: React.FC = () => {
  return (
    <div className="flex min-h-screen flex-col bg-white pl-2 pr-1 font-['Open_Sans','Noto_Sans',sans-serif] text-[14px] text-black">
      <div className="flex flex-1">
        <div className="flex min-w-0 flex-1 flex-col border-l border-r border-t border-[#a0a0a0] bg-[#f0f0f0]">
          <header className="flex h-[37px] justify-end bg-white">
            <button type="button" aria-label="Свернуть" className="flex w-[58px] items-center justify-center">
              <svg width="12" height="13" shapeRendering="crispEdges" aria-hidden="true"><path d="M0 6.500h12" stroke="#000" /></svg>
            </button>
            <button type="button" aria-label="Развернуть" className="flex w-[58px] items-center justify-center">
              <svg width="12" height="12" fill="none" shapeRendering="crispEdges" aria-hidden="true"><path d="M.5.5h11v11H.5z" stroke="#000" /></svg>
            </button>
            <button type="button" aria-label="Закрыть" className="flex w-[60px] items-center justify-center">
              <svg width="12" height="12" aria-hidden="true"><path d="M0 0l12 12M12 0L0 12" stroke="#000" strokeWidth="1.200" /></svg>
            </button>
          </header>

          <div className="flex h-[25px] items-center pl-[5px]">
            <svg width="21" height="21" viewBox="0 0 21 21" fill="none" aria-hidden="true">
              <rect x=".7" y="1.500" width="15" height="12" rx="1" fill="#e9f2fd" stroke="#5b8fd8" />
              <path d="M1 3h14" stroke="#3f74c9" strokeWidth="2" />
              <path d="M3 9l2-3 2 3 2-4 2 4" stroke="#5b8fd8" />
              <rect x="7.500" y="8.500" width="12" height="11" rx="1" fill="#fff" stroke="#5b8fd8" />
              <path d="M8 10h11" stroke="#7aa5e6" strokeWidth="2" />
              <path d="M9.500 13l2 4 2-4 2 4 2-2" stroke="#4a7bd0" />
            </svg>
            <nav className="flex flex-1 gap-[21px] pl-2">
              {menuItems.map((m) => (
                <a key={m} href="#menu">{m}</a>
              ))}
            </nav>
            <div className="mr-px flex gap-[2px] pt-px">
              <button type="button" aria-label="Свернуть окно" className="flex h-[22px] w-[22px] items-center justify-center border border-[#e2e2e2] bg-white">
                <svg width="12" height="12" aria-hidden="true"><path d="M3 9h6" stroke="#708090" strokeWidth="2" /></svg>
              </button>
              <button type="button" aria-label="Восстановить окно" className="flex h-[22px] w-[22px] items-center justify-center border border-[#e2e2e2] bg-white">
                <svg width="12" height="12" fill="none" aria-hidden="true">
                  <path d="M4.500 4V2.500h5v4H8M2.500 5.500h5v4h-5zM2 6h6M4 3h6" stroke="#708090" />
                </svg>
              </button>
              <button type="button" aria-label="Закрыть окно" className="flex h-[22px] w-[22px] items-center justify-center border border-[#e2e2e2] bg-white">
                <svg width="12" height="12" aria-hidden="true"><path d="M3 3l6 6M9 3L3 9" stroke="#708090" strokeWidth="2" /></svg>
              </button>
            </div>
          </div>

          <MainToolbar />
          <DrawToolbar />
          <Chart />
          <ChartTabs />
          <StatusBar />
        </div>
        <div className="flex w-1 shrink-0 flex-col">
          <div className="h-6 bg-[#b0b0b0]" />
          <div className="flex-1 bg-[#d2d2d2]" />
        </div>
      </div>
      <TaskBar />
    </div>
  );
};

export default App;
